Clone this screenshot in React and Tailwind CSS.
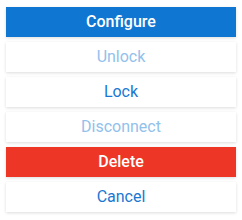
const buttons = [
  { label: 'Configure', cls: 'bg-[#0f76d2] text-white font-medium' },
  { label: 'Unlock', cls: 'bg-white text-[#92c1ec]' },
  { label: 'Lock', cls: 'bg-white text-[#1a78d2]' },
  { label: 'Disconnect', cls: 'bg-white text-[#92c1ec]' },
  { label: 'Delete', cls: 'bg-[#ee3626] text-white font-medium' },
  { label: 'Cancel', cls: 'bg-white text-[#1a78d2]' },
];

export default function App() {
  return (
    <div className="w-[242px] h-[220px] bg-white pt-[7px] px-[6px] flex flex-col gap-[5px] font-['Roboto',sans-serif]">
      {buttons.map(b => (
        <button
          key={b.label}
          className={'h-[30px] w-full text-[16px] leading-none shadow-[0_1px_3px_rgba(0,0,0,0.14)] ' + b.cls}
        >
          {b.label}
        </button>
      ))}
    </div>
  );
}
